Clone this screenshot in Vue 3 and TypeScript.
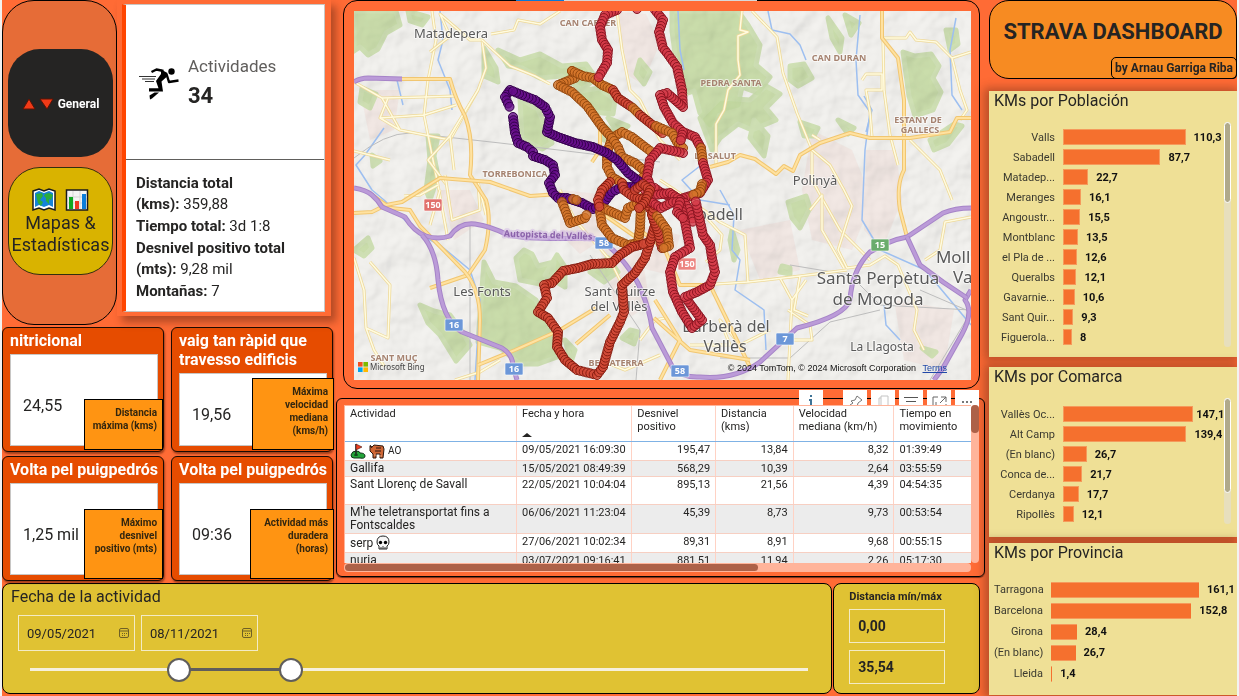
<script setup lang="ts">
import { ref, computed } from 'vue'

interface Bar { name: string; value: string }
interface Chart { title: string; unit: number; labels: string; scroll: number; bars: Bar[] }
interface Dot { x: number; y: number; c: string }
interface Place { t: string; x: number; y: number; s: number }

function bars(text: string): Bar[] {
  return text.split('|').map((part) => {
    const [name, value] = part.split('=')
    return { name, value }
  })
}

const charts: Chart[] = [
  {
    title: 'KMs por Población', unit: 0.69, labels: 'wide', scroll: 36,
    bars: bars('Valls=110,3|Sabadell=87,7|Matadep...=22,7|Meranges=16,1|Angoustr...=15,5|Montblanc=13,5|el Pla de ...=12,6|Queralbs=12,1|Gavarnie...=10,6|Sant Quir...=9,3|Figuerola...=8'),
  },
  {
    title: 'KMs por Comarca', unit: 0.55, labels: 'wide tight', scroll: 75,
    bars: bars('Vallès Oc...=147,1|Alt Camp=139,4|(En blanc)=26,7|Conca de...=21,7|Cerdanya=17,7|Ripollès=12,1'),
  },
  {
    title: 'KMs por Provincia', unit: 0.51, labels: 'narrow', scroll: 0,
    bars: bars('Tarragona=161,1|Barcelona=152,8|Girona=28,4|(En blanc)=26,7|Lleida=1,4'),
  },
]

const barWidth = (chart: Chart, bar: Bar) => ({
  width: `${parseFloat(bar.value.replace(',', '.')) * chart.unit}%`,
})

const kpis = [
  { title: 'nitricional', value: '24,55', tag: 'Distancia máxima (kms)', kind: 'k1' },
  { title: 'vaig tan ràpid que travesso edificis', value: '19,56', tag: 'Máxima velocidad mediana (kms/h)', kind: 'k2' },
  { title: 'Volta pel puigpedrós', value: '1,25 mil', tag: 'Máximo desnivel positivo (mts)', kind: 'k3' },
  { title: 'Volta pel puigpedrós', value: '09:36', tag: 'Actividad más duradera (horas)', kind: 'k4' },
]

const rows = [
  { name: 'AO', icon: 'golf', h: 'h19', cells: ['09/05/2021 16:09:30', '195,47', '13,84', '8,32', '01:39:49'] },
  { name: 'Gallifa', icon: '', h: 'h16', cells: ['15/05/2021 08:49:39', '568,29', '10,39', '2,64', '03:55:59'] },
  { name: 'Sant Llorenç de Savall', icon: '', h: 'h28', cells: ['22/05/2021 10:04:04', '895,13', '21,56', '4,39', '04:54:35'] },
  { name: "M'he teletransportat fins a Fontscaldes", icon: '', h: 'h28', cells: ['06/06/2021 11:23:04', '45,39', '8,73', '9,73', '00:53:54'] },
  { name: 'serp', icon: 'skull', h: 'h19', cells: ['27/06/2021 10:02:34', '89,31', '8,91', '9,68', '00:55:15'] },
  { name: 'nuria', icon: '', h: 'h19', cells: ['03/07/2021 09:16:41', '881,51', '11,94', '2,26', '05:17:30'] },
]

const from = ref(191)
const to = ref(335)
const span = computed(() => ({ left: `${from.value / 10}%`, width: `${(to.value - from.value) / 10}%` }))

/* GPS tracks: one dot every few units along each line */
const tracks: [string, string][] = [
  ['a', '572,71 575,78 558,85 572,92 587,106 602,127 612,138 607,153 607,167 612,177 622,183 628,192'],
  ['a', '572,71 583,76 593,78 602,85 613,90'],
  ['b', '613,90 618,98 633,108'],
  ['a', '633,108 640,115'],
  ['b', '640,115 655,127 665,135'],
  ['a', '612,138 622,132 632,137 645,147 653,153'],
  ['a', '612,138 618,147 622,157 635,163 647,173 640,180'],
  ['p', '510,90 505,97 511,110'],
  ['p', '513,117 515,133 518,143 527,147 533,152 533,156 545,160 553,165 555,175 549,183 553,193 558,198 567,198 582,203 593,209 602,205 608,197 612,192 622,187 638,187 640,182 628,173 617,160 607,153 593,147 575,143 558,137 547,132 550,117 545,107 535,100 522,95 510,90'],
  ['a', '573,199 580,201'],
  ['a', '562,202 567,215 570,223 585,218 588,212'],
  ['a', '600,212 602,225 612,238 628,245 638,243 640,228 641,205'],
  ['a', '603,208 625,218 628,208 640,202 645,195'],
  ['b', '610,182 602,190 598,200 600,210'],
  ['b', '622,183 624,190 632,196 640,199 652,199'],
  ['b', '640,245 632,247 620,255 612,263 592,264 578,268 563,271 552,283 544,285 547,298 538,312 548,318 558,332 557,347 565,360 577,370 597,375 603,367 610,342 620,322 624,312 622,285 635,273 645,258 650,242 640,245'],
  ['b', '650,242 655,225 652,212 645,200'],
  ['b', '662,248 658,232 652,215 655,202'],
  ['a', '657,216 667,230 669,246 661,249'],
  ['r', '617,10 605,15 600,27 602,40 608,50 607,63 597,80'],
  ['r', '637,9 640,9'],
  ['r', '655,10 663,20 659,32 663,48 667,53 677,67 682,90 683,107 667,93 660,95 664,107 673,123 683,132 695,137 702,150'],
  ['a', '656,126 672,133 677,142 685,150'],
  ['r', '683,132 680,143'],
  ['a', '701,148 703,163'],
  ['r', '703,163 708,180 700,193 677,200 660,192 652,186'],
  ['a', '702,184 700,192 690,196'],
  ['r', '683,153 660,148 650,160 647,177 652,190'],
  ['r', '645,190 655,195 670,193 685,203 692,215 693,225'],
  ['r', '650,201 661,208 673,202 680,202 685,222 690,248 675,257 670,272 673,292 682,312 692,328 702,320 685,297 697,292 710,285 715,272 712,258 710,245 703,235 698,212 695,198'],
  ['r', '680,202 677,212 685,220'],
  ['b', '635,190 643,184 650,190 645,202 637,210'],
]

function sample(kind: string, text: string): Dot[] {
  const pts = text.split(' ').map((p) => p.split(',').map(Number))
  const out: Dot[] = []
  for (let i = 0; i < pts.length - 1; i++) {
    const [ax, ay] = pts[i]
    const [bx, by] = pts[i + 1]
    const n = Math.max(1, Math.round(Math.hypot(bx - ax, by - ay) / 3.2))
    for (let k = 0; k < n; k++) {
      out.push({ x: ax + ((bx - ax) * k) / n, y: ay + ((by - ay) * k) / n, c: kind })
    }
  }
  return out
}
const dots = tracks.flatMap(([kind, text]) => sample(kind, text))

const greens = [
  'M354 11h42l4 14-14 8-8 16-10 6-8-8-6 4zM362 88l14 6-6 14-10-6zM372 155l8 6-7 5z',
  'M408 11l20 6-6 8-12-4zM498 50l22 10 20-6 22 12 24-2 10 14-14 12-20-14-22 2-18-10-14-2zM484 48l12 20 2 14-14-6zM575 92l24-4 16 12-2 14-20-2zM608 118l20 8-10 8z',
  'M672 11h66l10 14 12 20-4 20 14 12-12 16-16-6-4 18-22 6-6 14-10-12-6-22-12 4-6-34-4-30z',
  'M700 118l20-20 30 2 16-14 14 8-14 14 10 12-24 10-14-6-18 14-8 12zM754 120l14 16-4 20-14-18zM790 66l14-2 8 14-14 8-8-6z',
  'M828 18l4 20 8 14 2-14zM845 15l14 8-8 12zM903 52l12 4 16-2 8 12-6 12 8 14-8 18-18 6-6-20zM946 30l10 0 2 14-8 6zM838 120l16 8-6 6zM930 140l24-16 8 2-14 18-14 6zM800 122l18 6-4 8-10 0z',
  'M516 258l8-8 8 4 6 12 16-4-2 14-12 8-20-4zM484 262l10 20 22 4 20 14 6 12 18 20 0 24-22 8-18 0-20-16-22-6zM545 275l12-20 8 12 0 20z',
  'M420 305l14 6 16 4 12 16 8 14-14 16-16-26-12-12zM354 250l14-12 4 10-8 8zM590 272l18-14 10 14-14 10zM630 330l8 2-4 12-12-6zM565 340l10 10-4 12z',
  'M788 202l18-6 4 12-10 20-8-10zM732 230l6 20-4 10-4-20zM782 266l8 2 0 6-10-2zM922 348l10 8 4-4zM520 99l18 10 14 34-10 6-20-10z',
  'M428 136h10l-4 20 4 20-8 24-4-10 4-30zM640 60l10 12-6 12-8-10zM598 120l14 12-8 8z',
]
const pinks = [
  'M618 12l28 2 14 30-18 40-16-10zM560 190l40 4 10 40-30 20-20-20zM640 225l40 10-10 40-26-6zM812 130l40 20 20 50-20 50-40-10-10-50zM866 150l30 0 6 50-20 50-18-20zM740 230l50-10 10 50-40 10zM910 60l20 20-10 40zM440 190l30 0 14 30-30 20zM360 90l40 0-6 40-24 10zM894 300l60 10-10 60-40-10zM600 250l40-6 10 60-30 20z',
]
const highways = [
  'M354 188Q366 190 372 195T382 207L405 217Q414 232 426 236T450 236Q460 222 475 224T508 235Q530 240 592 238Q606 242 615 252Q634 272 642 292T652 328L673 368Q683 378 700 377Q735 380 760 362L797 328Q845 316 850 300Q852 270 870 252Q890 240 907 237L943 213Q955 208 971 208',
  'M422 235Q436 250 438 280Q442 320 462 332L502 348Q513 355 513 366L517 380',
  'M354 82Q360 78 368 78L402 79', 'M971 290L965 300Q974 312 962 334L943 368L934 380',
  'M907 237L920 265L943 282L967 298',
]
const arterials = [
  'M402 79H450Q455 98 465 116Q474 140 470 175L486 200Q492 220 485 250L468 275L430 288',
  'M354 213L372 212L382 207L410 210L420 226L465 272Q480 290 480 320L478 380',
  'M372 195L386 205L402 202L440 178L490 182L530 196L560 194L600 212L640 240',
  'M882 11V38L898 58L904 100V170Q896 185 900 210L907 237',
  'M710 167L728 162L740 155L755 159L776 174L784 166L793 171L800 155L820 143L850 133L870 138L910 138L950 132L957 118L971 118',
  'M600 130V150L592 162M640 230L665 250L680 285L710 285L750 367M576 344L590 332L610 315',
  'M478 365L515 350L560 330L596 308M655 300L680 340L660 380M654 318L690 350L750 360',
]
const roads = [
  'M432 11L436 40L428 80L424 115L438 185L448 240M354 82L382 98L424 97L455 96M382 98L400 130L380 118L388 98M380 118L424 115L456 105M400 130L450 140L478 90',
  'M430 52L450 36L440 14L470 40L482 40L486 68L478 90L450 136L428 160L446 184M450 136L454 170M438 185L420 195L404 196',
  'M482 40L510 66L535 76L550 84M491 34L514 30L518 20L540 24L560 11M617 11L622 50L630 90L640 100L660 140L680 160',
  'M752 11L777 37L783 73L797 113L812 150L812 180L823 200L840 230L870 260M742 11L740 30L748 32L738 36L738 60L740 75L728 90L724 110L716 124L716 165',
  'M882 38L906 38L910 32L916 40L936 42L952 58L971 52M952 58L960 90L967 110L960 120M883 40L884 90L890 135L898 165M862 80L866 74H882V90H866L870 112L872 137',
  'M812 150L830 165L844 190L852 206L838 250L847 268M820 140L812 135M910 140L940 170L952 200M971 217L945 222L940 250L925 260M847 268L870 265L885 256L898 265L917 310L914 330L924 350',
  'M660 180L690 200L720 222L745 235L748 282L700 285M748 282L800 276L847 270M780 278L792 300L788 380M792 300L806 280M788 310L810 325L812 340L790 340M800 276L794 310L808 316',
  'M354 258L364 290L366 328L388 338L390 285L370 262M366 328L374 350L384 366M440 190L430 225M445 175L452 220L480 210L478 182L486 215',
  'M810 210L822 195L822 230L844 268M700 210L722 235L720 250L706 262M690 345L730 345L720 320L740 345L770 330',
  'M560 190L575 220L610 260L625 290M575 200L620 220M640 340L655 320L665 318M600 360L625 370L660 355M455 380L480 372L500 360M350 150L390 160',
]
const rivers = [
  'M440 11L443 40L438 60L450 90L452 110M397 80L403 105M384 128L365 155L356 165L372 190L384 200L420 235L440 245L470 270L480 300L475 380',
  'M678 11L680 50L684 70M768 11L772 30L790 34L800 45L806 60M860 15L856 60L858 95L870 112L865 150L862 220L880 250L925 270L971 325',
  'M720 190L734 215L732 250L740 260L735 290L764 310L766 350M956 18L950 50L952 95L962 110M700 166L682 180L700 200L730 205M884 305L886 325L900 340M864 96L872 110L866 132',
]
const rails = [
  'M354 158Q385 133 410 133L500 143L600 155L660 162M470 225L470 380M590 255L640 330L636 380M720 358L790 358L830 322L880 310M920 290L971 312L930 380M790 265L850 275L880 305L971 310',
]

const places: Place[] = [
  { t: 'Matadepera', x: 451, y: 38, s: 13 }, { t: 'Polinyà', x: 815, y: 185, s: 13 },
  { t: 'Les Fonts', x: 482, y: 296, s: 13 }, { t: 'Sant Quirze', x: 620, y: 296, s: 13 },
  { t: 'del Vallès', x: 619, y: 311, s: 13 }, { t: 'Sabadell', x: 711, y: 220, s: 16 },
  { t: 'Barberà del', x: 726, y: 332, s: 16 }, { t: 'Vallès', x: 725, y: 352, s: 16 },
  { t: 'Santa Perpètua', x: 878, y: 284, s: 17 }, { t: 'de Mogoda', x: 878, y: 305, s: 17 },
  { t: 'La Llagosta', x: 882, y: 351, s: 12 }, { t: 'Mollet', x: 961, y: 263, s: 17 }, { t: 'Vallès', x: 976, y: 283, s: 17 },
]
const suburbs: Place[] = [
  { t: 'CAN CARRER', x: 588, y: 26, s: 9 }, { t: 'PEDRA SANTA', x: 731, y: 86, s: 9 },
  { t: 'CAN DURAN', x: 839, y: 61, s: 9 }, { t: 'ESTANY DE', x: 918, y: 123, s: 9 },
  { t: 'GALLECS', x: 920, y: 133, s: 9 }, { t: 'LA SALUT', x: 715, y: 159, s: 9 },
  { t: 'TORREBONICA', x: 515, y: 177, s: 9 }, { t: 'SANT MUÇ', x: 394, y: 361, s: 9 },
  { t: 'BELLATERRA', x: 616, y: 366, s: 9 },
]
const shields = [
  { t: '150', x: 433, y: 205, c: '#e1706c' }, { t: '150', x: 687, y: 264, c: '#ec8581' },
  { t: '58', x: 604, y: 243, c: '#6c97d8' }, { t: '58', x: 680, y: 371, c: '#6c97d8' },
  { t: '16', x: 454, y: 325, c: '#6c97d8' }, { t: '16', x: 514, y: 369, c: '#6c97d8' },
  { t: '7', x: 785, y: 339, c: '#6c97d8' }, { t: '15', x: 880, y: 245, c: '#6aac6c' },
]
</script>

<template>
  <div class="dash">
    <main class="main">
      <div class="upper">
        <div class="left">
          <div class="intro">
            <nav class="nav">
              <button class="nav-btn dark" type="button">
                <svg width="32" height="12" viewBox="0 0 32 12" aria-hidden="true">
                  <path d="M1 11L7 1l6 10zM18 1h13l-6 10z" fill="#f03a17" stroke="#5c1205" />
                </svg>
                <span>General</span>
              </button>
              <button class="nav-btn gold" type="button">
                <span class="pics">
                  <svg width="24" height="24" viewBox="0 0 24 24" aria-hidden="true">
                    <path d="M1 3l6-2 5 2 5-2 6 2v19l-6-2-5 2-5-2-6 2z" fill="#fff" stroke="#1b1b1b" stroke-width="1.5" />
                    <path d="M3 5l4-2 5 2 5-2 4 2v14l-4-2-5 2-5-2-4 2z" fill="#1583d8" />
                    <path d="M4 6l6-1 1 3-3 4 3 2-2 4-3-3-1-4zM13 6l4-1 4 2-2 5-2-1 0 5-3-3 0-3-2-2z" fill="#2bab3d" />
                  </svg>
                  <svg width="24" height="24" viewBox="0 0 24 24" aria-hidden="true">
                    <path d="M1.500 2h21v20h-21z" fill="#f4f4f4" stroke="#1b1b1b" stroke-width="1.500" />
                    <path d="M2 9h20M2 15h20M8 3v18M15 3v18" stroke="#d5d5d5" />
                    <path d="M4 9h4v12H4z" fill="#11a822" /><path d="M10 13h4v8h-4z" fill="#ee3a22" /><path d="M17 6h4v15h-4z" fill="#0c7dd9" />
                  </svg>
                </span>
                <span>Mapas &amp; Estadísticas</span>
              </button>
            </nav>
            <section class="card">
              <div class="card-in">
                <div class="card-top">
                  <svg width="40" height="34" viewBox="0 0 40 34" aria-hidden="true">
                    <circle cx="32.500" cy="4.500" r="3.200" />
                    <path d="M12.500 5l5-2.500 7 1.500" fill="none" stroke="#000" stroke-width="2.400" stroke-linejoin="round" />
                    <path d="M22 2.500l6.500 3.500-1 4-5 4.500 1.500 10h-14v-3.200h9.500L17 14l5-7z" />
                    <path d="M27.500 7l2.500 8 9.500-1.500" fill="none" stroke="#000" stroke-width="2.400" stroke-linejoin="round" />
                    <path d="M10.500 28.500l5-3h4.500l-7 6-2 1z" />
                    <path d="M0 9.500h17M3 12h13M6 14.500h9" stroke="#333" />
                  </svg>
                  <div>
                    <div class="muted">Actividades</div>
                    <div class="count">34</div>
                  </div>
                </div>
                <div class="card-bottom">
                  <p><b>Distancia total<br />(kms):</b> 359,88</p>
                  <p><b>Tiempo total:</b> 3d 1:8</p>
                  <p><b>Desnivel positivo total<br />(mts):</b> 9,28 mil</p>
                  <p><b>Montañas:</b> 7</p>
                </div>
              </div>
            </section>
          </div>
          <div class="kpis">
            <section v-for="k in kpis" :key="k.kind" class="kpi" :class="k.kind">
              <h2>{{ k.title }}</h2>
              <div class="kpi-box">{{ k.value }}</div>
              <div class="tag">{{ k.tag }}</div>
            </section>
          </div>
        </div>

        <div class="center">
          <section class="map-frame">
            <div class="map">
              <svg class="map-svg" viewBox="354 11 617 369" preserveAspectRatio="xMidYMid slice" role="img" aria-label="Mapa">
                <defs>
                  <filter id="relief" x="0" y="0" width="1" height="1">
                    <feTurbulence type="fractalNoise" baseFrequency="0.035" numOctaves="3" seed="7" />
                    <feDiffuseLighting surfaceScale="5" lighting-color="#fff"><feDistantLight azimuth="225" elevation="58" /></feDiffuseLighting>
                  </filter>
                </defs>
                <rect x="354" y="11" width="617" height="369" fill="#f3f2ef" />
                <path v-for="d in pinks" :key="d" :d="d" fill="#f1e4df" opacity=".7" />
                <path v-for="d in greens" :key="d" :d="d" fill="#c3daa0" stroke="#c9deaa" stroke-width="5" stroke-linejoin="round" opacity=".85" />
                <rect class="relief" x="354" y="11" width="617" height="369" filter="url(#relief)" />
                <path v-for="d in rivers" :key="d" :d="d" class="line" stroke="#9dbff0" stroke-width="1.500" />
                <path v-for="d in rails" :key="d" :d="d" class="line" stroke="#bdbdbd" />
                <g v-for="d in roads" :key="d">
                  <path :d="d" class="line" stroke="#eed999" stroke-width="3" />
                  <path :d="d" class="line" stroke="#fffbe0" stroke-width="1.500" />
                </g>
                <g v-for="d in arterials" :key="d">
                  <path :d="d" class="line" stroke="#f1c671" stroke-width="4" />
                  <path :d="d" class="line" stroke="#ffe2a0" stroke-width="2" />
                </g>
                <g v-for="d in highways" :key="d">
                  <path :d="d" class="line" stroke="#a684c8" stroke-width="5" />
                  <path :d="d" class="line" stroke="#bb9bd8" stroke-width="3" />
                </g>
                <text class="route" x="548" y="238" transform="rotate(2 548 238)">Autopista del Vallès</text>
                <g v-for="s in shields" :key="s.t + s.x">
                  <rect :x="s.x - 9" :y="s.y - 6" width="18" height="12" rx="1" :fill="s.c" stroke="#fff" stroke-opacity=".6" />
                  <text class="shield" :x="s.x" :y="s.y + 3">{{ s.t }}</text>
                </g>
                <text v-for="p in suburbs" :key="p.t" class="suburb" :x="p.x" :y="p.y" :font-size="p.s">{{ p.t }}</text>
                <text v-for="p in places" :key="p.t + p.x" class="place" :x="p.x" :y="p.y" :font-size="p.s">{{ p.t }}</text>
                <circle v-for="(d, i) in dots" :key="i" :cx="d.x" :cy="d.y" r="4.500" :class="['dot', d.c]" />
              </svg>
              <div class="bing">
                <svg width="10" height="10" viewBox="0 0 10 10" aria-hidden="true">
                  <path d="M0 0h4.600v4.600H0z" fill="#f25022" /><path d="M5.400 0H10v4.600H5.400z" fill="#7fba00" />
                  <path d="M0 5.400h4.600V10H0z" fill="#00a4ef" /><path d="M5.400 5.400H10V10H5.400z" fill="#ffb900" />
                </svg>
                <span>Microsoft Bing</span>
              </div>
              <div class="legal">© 2024 TomTom, © 2024 Microsoft Corporation <a href="#">Terms</a></div>
            </div>
          </section>

          <section class="table-frame">
            <div class="tools">
              <button type="button" aria-label="Información"><svg width="24" height="16"><path d="M12 5v2M12 9v7M10 10h2" stroke="#3f7396" stroke-width="2" fill="none" /></svg></button>
              <button type="button" class="gap" aria-label="Anclar"><svg width="24" height="16"><path d="M7 15l3-2-2-2 4-1 2-4 5 4-4 3-1 4-2-2" stroke="#777" fill="none" /></svg></button>
              <button type="button" aria-label="Copiar"><svg width="24" height="16"><path d="M8 16V8h2M10 6h7v12h-7z" stroke="#c4c4c4" fill="none" /></svg></button>
              <button type="button" aria-label="Filtros"><svg width="24" height="16"><path d="M5 7.500h14M7 11.500h10M10 15.500h4" stroke="#555" fill="none" /></svg></button>
              <button type="button" aria-label="Modo de enfoque"><svg width="24" height="16"><path d="M11 7H6v9M14 7h5v5M19 7l-6 6M19 14v2M9 12v4h4" stroke="#666" fill="none" /></svg></button>
              <button type="button" class="more" aria-label="Más opciones"><svg width="24" height="16"><path d="M7 12h2M11 12h2M15 12h2" stroke="#777" stroke-width="2" /></svg></button>
            </div>
            <div class="table-row">
              <div class="table-wrap">
                <table>
                  <colgroup><col class="c1" /><col class="c2" /><col class="c3" /><col class="c4" /><col class="c5" /><col class="c6" /></colgroup>
                  <thead>
                    <tr>
                      <th>Actividad</th>
                      <th>Fecha y hora<span class="sort"></span></th>
                      <th>Desnivel positivo</th><th>Distancia (kms)</th><th>Velocidad mediana (km/h)</th><th>Tiempo en movimiento</th>
                    </tr>
                  </thead>
                  <tbody>
                    <tr v-for="r in rows" :key="r.name" :class="r.h">
                      <td>
                        <span v-if="r.icon" class="with-icon">
                          <template v-if="r.icon === 'golf'">
                            <svg width="16" height="16" viewBox="0 0 16 16" aria-hidden="true">
                              <path d="M1 12q1-4 5-4t4 2q5 0 5 3t-5 2H4q-3 0-3-3z" fill="#23a53a" stroke="#12331a" />
                              <path d="M6 11V1" stroke="#222" stroke-width="1.500" /><path d="M6 1l6 3-6 3z" fill="#ef3e22" stroke="#40150d" stroke-width=".6" />
                              <ellipse cx="6" cy="12" rx="2" ry="1" fill="#143e1d" />
                            </svg>
                            <svg width="16" height="16" viewBox="0 0 16 16" aria-hidden="true">
                              <path d="M1 3l2 1 2-2 9 1 1 3-1 9h-3v-4H7v4H4v-4L1 8z" fill="#ce6534" stroke="#2c170e" />
                              <path d="M7 5h5M6 8h6M3 5l-2-3" stroke="#2c170e" /><path d="M5 12h2M10 13h3" stroke="#eba27b" />
                            </svg>
                            <small>{{ r.name }}</small>
                          </template>
                          <template v-else>
                            {{ r.name }}
                            <svg width="14" height="16" viewBox="0 0 14 16" aria-hidden="true">
                              <path d="M7 1q6 0 6 6 0 3-2 4v3H3v-3Q1 10 1 7q0-6 6-6z" fill="#f6f6f6" stroke="#222" />
                              <circle cx="4.500" cy="7.500" r="1.700" /><circle cx="9.500" cy="7.500" r="1.700" /><path d="M5 12v2M7 11v3M9 12v2" stroke="#333" />
                            </svg>
                          </template>
                        </span>
                        <template v-else>{{ r.name }}</template>
                      </td>
                      <td v-for="(c, i) in r.cells" :key="i" :class="{ num: i > 0 && i < 4 }">{{ c }}</td>
                    </tr>
                  </tbody>
                </table>
              </div>
              <div class="vbar"><i></i></div>
            </div>
            <div class="hbar"><i></i></div>
          </section>
        </div>
      </div>

      <div class="lower">
        <section class="slicer">
          <h2>Fecha de la actividad</h2>
          <div class="dates">
            <label v-for="d in ['09/05/2021', '08/11/2021']" :key="d" class="date">
              <input type="text" :value="d" aria-label="Fecha" />
              <svg width="10" height="10" viewBox="0 0 10 10" aria-hidden="true">
                <rect x=".5" y=".5" width="9" height="9" rx="1.500" fill="none" stroke="#6f6025" />
                <path d="M1 3h8M3 5.500h1M5 5.500h1M7 5.500h1M3 7.500h1M5 7.500h1" stroke="#6f6025" />
              </svg>
            </label>
          </div>
          <div class="slider">
            <div class="rail"><div class="range" :style="span"></div></div>
            <input v-model.number="from" type="range" min="0" max="1000" aria-label="Desde" />
            <input v-model.number="to" type="range" min="0" max="1000" aria-label="Hasta" />
          </div>
        </section>
        <section class="minmax">
          <h2>Distancia mín/máx</h2>
          <input type="text" value="0,00" aria-label="Distancia mínima" />
          <input type="text" value="35,54" aria-label="Distancia máxima" />
        </section>
      </div>
    </main>

    <aside class="side">
      <header class="head">
        <h1>STRAVA DASHBOARD</h1>
        <div class="author">by Arnau Garriga Riba</div>
      </header>
      <section v-for="c in charts" :key="c.title" class="panel" :class="c.labels">
        <h2>{{ c.title }}</h2>
        <div class="plot">
          <ul>
            <li v-for="b in c.bars" :key="b.name">
              <span class="name">{{ b.name }}</span>
              <div class="bar-area"><div class="bar" :style="barWidth(c, b)"></div><b>{{ b.value }}</b></div>
            </li>
          </ul>
          <div v-if="c.scroll" class="pbar"><i :style="{ height: c.scroll + '%' }"></i></div>
        </div>
      </section>
    </aside>
  </div>
</template>

<style>
body { background: #f3f2f1; }
</style>

<style scoped>
* { box-sizing: border-box; }
h1, h2, p, ul { margin: 0; padding: 0; font-weight: 400; list-style: none; }
button, input { font: inherit; color: inherit; }
.dash {
  display: flex; gap: 4px; margin: 0 2px; min-height: 100vh; overflow: hidden;
  background: #ff6b35; color: #252423; font-family: Roboto, "Liberation Sans", sans-serif; font-size: 14px;
}
.main { flex: 983; min-width: 0; display: flex; flex-direction: column; gap: 2px; }
.upper { display: grid; grid-template-columns: minmax(0, 329fr) minmax(0, 649fr); gap: 5px; }
.intro { display: grid; grid-template-columns: 115px minmax(0, 1fr); height: 325px; }
.nav {
  display: flex; flex-direction: column; justify-content: center; gap: 10px; padding: 0 3px 2px 5px;
  background: #e66c37; border: 1px solid #000; border-radius: 32px;
}
.nav-btn {
  height: 108px; padding: 0; border-radius: 32px; display: flex; align-items: center; justify-content: center;
  gap: 4px; cursor: pointer;
}
.dark { background: #252423; border: 0; color: #fff; font-size: 12px; font-weight: 700; padding-top: 3px; }
.gold { flex-direction: column; gap: 0; background: #d9b300; border: 1px solid #33300f; font-size: 18px; line-height: 22px; padding-top: 2px; }
.pics { display: flex; gap: 9px; }
.card { height: 316px; padding: 4px 6px 4px 5px; background: #ff6b35; box-shadow: 5px 6px 8px rgba(80, 30, 15, .45); z-index: 1; }
.card-in { height: 100%; background: #fff; border: 1px solid #c8c6c4; border-left: 4px solid #ff4500; display: flex; flex-direction: column; }
.card-top { height: 155px; display: flex; align-items: center; gap: 9px; padding: 3px 0 0 13px; border-bottom: 1px solid #605e5c; }
.muted { color: #605e5c; font-size: 17px; line-height: 24px; }
.count { font-size: 22px; font-weight: 700; line-height: 36px; }
.card-bottom { padding: 13px 8px 0 10px; font-size: 15px; line-height: 21px; white-space: nowrap; }
.card-bottom p + p { margin-top: 1px; }
.kpis { display: grid; grid-template-columns: 1fr 1fr; grid-auto-rows: 125px; gap: 4px 7px; margin-top: 2px; }
.kpi {
  position: relative; display: flex; flex-direction: column; padding: 3px 5px 5px 7px; background: #e64c00;
  border: 1px solid #1c0a02; border-radius: 6px; box-shadow: 1px 2px 2px rgba(70, 20, 0, .5);
}
.kpi h2 { color: #fff; font-size: 16px; font-weight: 700; line-height: 19px; white-space: nowrap; padding-bottom: 4px; }
.k2 h2 { white-space: normal; }
.kpi-box {
  flex: 1; display: flex; align-items: center; padding: 10px 0 0 12px; background: #fff;
  border: 1px solid #c8c6c4; font-size: 16px; white-space: nowrap;
}
.tag {
  position: absolute; right: 0; bottom: 1px; width: 79px; height: 51px; padding: 6px 5px 0 4px; text-align: right;
  background: #ff9412; border: 1px solid #000; font-size: 10px; font-weight: 700; line-height: 13px; color: #33260f;
}
.k2 .tag { right: -2px; width: 82px; height: 72px; padding-left: 24px; }
.k3 .tag { height: 70px; }
.k4 .tag { right: -2px; width: 84px; height: 70px; }
.center { display: flex; flex-direction: column; gap: 9px; min-width: 0; }
.map-frame { position: relative; height: 389px; margin: 0 5px 0 7px; padding: 10px 8px 8px 10px; border: 1px solid #000; border-radius: 14px; }
.map-frame::before {
  content: ""; position: absolute; top: -1px; left: 172px; width: 241px; height: 1px;
  background: linear-gradient(90deg, #0a78d6 48px, #d9d9d9 48px);
}
.map { position: relative; height: 100%; overflow: hidden; }
.map-svg { display: block; width: 100%; height: 100%; font-family: "Noto Sans", "Open Sans", sans-serif; }
.map-svg text { text-anchor: middle; paint-order: stroke; stroke: #fff; stroke-opacity: .6; stroke-width: 2; stroke-linejoin: round; }
.relief { mix-blend-mode: multiply; opacity: .26; }
.line { fill: none; stroke-linejoin: round; }
.map-svg .place { fill: #595959; }
.map-svg .suburb { fill: #a68370; font-weight: 700; }
.map-svg .route { fill: #8b62aa; font-size: 9px; font-weight: 700; stroke: #d5c0e5; stroke-width: 4; }
.map-svg .shield { fill: #fff; stroke: none; font-size: 9px; font-weight: 700; }
.dot { stroke-width: 1; fill-opacity: .8; }
.p { fill: #650d8a; stroke: #33004a; }
.a { fill: #d4762a; stroke: #94480f; }
.b { fill: #d24836; stroke: #861c10; }
.r { fill: #d53a47; stroke: #8a1420; }
.bing { position: absolute; left: 4px; bottom: 8px; display: flex; align-items: center; gap: 2px; font: 8px/10px "Noto Sans", sans-serif; color: #444; }
.legal { position: absolute; right: 24px; bottom: 6px; font: 9px/11px "Liberation Sans", Arial, sans-serif; color: #111; white-space: nowrap; }
.legal a { color: #2148a8; margin-left: 4px; }
.table-frame { position: relative; height: 179px; padding: 6px 5px 4px 7px; border: 1px solid #000; border-radius: 6px; box-shadow: 0 1px 1px #7c2e14; }
.tools { position: absolute; top: -9px; right: 5px; display: flex; align-items: flex-start; gap: 4px; }
.tools button { display: flex; align-items: flex-start; width: 24px; height: 16px; padding: 0; border: 0; background: #fff; overflow: hidden; border-radius: 0; }
.tools .more { height: 23px; }
.tools button:nth-child(2) { margin-left: 16px; }
.tools svg { display: block; }
.table-row { position: relative; display: flex; height: 158px; }
.table-wrap { flex: 1; min-width: 0; overflow: hidden; background: #fff; border: 1px solid #ffb49a; border-right: 0; border-bottom: 0; }
table { width: 100%; table-layout: fixed; border-collapse: collapse; font-size: 11px; line-height: 13px; }
.c1 { width: 27.4%; } .c2 { width: 18.4%; } .c3 { width: 13.4%; } .c4 { width: 12.4%; } .c5 { width: 16.1%; } .c6 { width: 12.3%; }
th { height: 35px; padding: 1px 5px; text-align: left; vertical-align: top; font-weight: 400; border-bottom: 1px solid #7fb2e5; position: relative; }
th + th, td + td { border-left: 1px solid #ffd2c4; }
td { padding: 1px 5px; vertical-align: top; border-bottom: 1px solid #f7cfc2; }
td:first-child { font-size: 12px; padding-right: 20px; }
th:nth-child(3) { padding-right: 30px; }
th:nth-child(4) { padding-right: 25px; }
th:last-child { padding-right: 0; }
tbody tr:nth-child(even) { background: #ececec; }
.h19 { height: 19px; } .h16 { height: 16px; } .h28 { height: 28px; }
.num { text-align: right; }
.sort { display: block; width: 0; margin-top: 13px; border: 5px solid transparent; border-top: 0; border-bottom: 4px solid #252423; margin-bottom: -3px; }
.with-icon { display: flex; align-items: center; gap: 3px; line-height: 16px; }
.with-icon small { font-size: 10px; }
.vbar { width: 8px; background: #ffb49a; border-radius: 4px; }
.vbar i { display: block; height: 28px; background: #ad6148; border-radius: 4px; }
.hbar { height: 9px; margin-right: 8px; background: #ffb49a; border-radius: 4px; padding: 1px; }
.hbar i { display: block; width: 66%; height: 7px; background: #ad6148; border-radius: 4px; }
.lower { flex: 1; display: flex; gap: 1px; padding-right: 5px; margin-bottom: 2px; }
.slicer, .minmax { min-width: 0; background: #e0c233; border: 1px solid #000; border-radius: 8px; }
.slicer { flex: 1; padding: 2px 11px 0 8px; }
.slicer h2 { font-size: 16px; line-height: 22px; }
.dates { display: flex; gap: 6px; margin: 7px 0 0 7px; }
.date { width: 117px; height: 36px; display: flex; align-items: center; border: 1px solid #f3ebc6; padding: 0 5px 0 8px; }
.date input { flex: 1; min-width: 0; padding: 0; border: 0; background: none; font-size: 13px; outline: 0; }
.slider { position: relative; height: 24px; margin: 7px 0 0 7px; }
.rail { position: absolute; left: 12px; right: 12px; top: 10px; height: 3px; background: #f6f0dc; }
.range { position: absolute; top: 0; height: 3px; background: #605e5c; }
.slider input { position: absolute; inset: 0; width: 100%; height: 24px; margin: 0; background: none; appearance: none; pointer-events: none; }
.slider input::-webkit-slider-thumb {
  appearance: none; pointer-events: auto; width: 24px; height: 24px; border: 2px solid #605e5c; border-radius: 50%; background: #fff;
}
.minmax { width: 15%; padding: 3px 34px 0 15px; }
.minmax h2 { font-size: 11px; font-weight: 700; line-height: 20px; white-space: nowrap; }
.minmax input {
  display: block; width: 100%; height: 34px; margin: 2px 0 7px; padding: 0 8px; background: none; border: 1px solid #f3ebc6;
  border-radius: 0; font-size: 14px; font-weight: 700;
}
.side { flex: 248; min-width: 0; display: flex; flex-direction: column; padding-bottom: 1px; }
.head {
  position: relative; height: 79px; margin-bottom: 12px; padding-top: 15px; text-align: center; background: #f78b22;
  border: 1px solid #000; border-radius: 20px 20px 4px 20px;
}
.head h1 { font-size: 22px; font-weight: 700; line-height: 32px; white-space: nowrap; }
.author { position: absolute; right: -1px; bottom: -1px; padding: 0 3px; border: 1px solid #000; border-radius: 5px; font-size: 12px; font-weight: 700; line-height: 20px; white-space: nowrap; }
.panel { background: #efe096; padding: 0 6px 0 5px; box-shadow: -2px 0 9px 3px rgba(90, 40, 25, .42); }
.panel h2 { font-size: 16px; line-height: 20px; }
.panel:nth-of-type(1) { height: 266px; margin-bottom: 10px; }
.panel:nth-of-type(2) { height: 170px; margin-bottom: 6px; }
.panel:nth-of-type(3) { flex: 1; }
.plot { display: flex; margin-top: 11px; }
.plot ul { flex: 1; min-width: 0; padding-top: 6px; }
.panel:nth-of-type(1) ul { padding-top: 5px; }
.plot li { display: flex; align-items: center; height: 20px; font-size: 11px; }
.name { width: 61px; margin-right: 8px; text-align: right; white-space: nowrap; color: #3b3a30; }
.bar-area { flex: 1; min-width: 0; display: flex; align-items: center; }
.bar { flex: none; height: 16px; background: #f5702e; border: 1px solid #f59a5c; }
.bar-area b { margin-left: 8px; color: #111; }
.tight li:first-child b { margin-left: 3px; }
.pbar { width: 7px; background: #e7dfbd; border-radius: 4px; }
.pbar i { display: block; background: #b0a98b; border: 1px solid #fff; border-radius: 4px; }
.narrow .plot { margin-top: 10px; }
.narrow .name { width: 49px; }
.narrow li { height: 21px; }
.narrow .bar { min-width: 1px; border-width: 1px 0; }
</style>
